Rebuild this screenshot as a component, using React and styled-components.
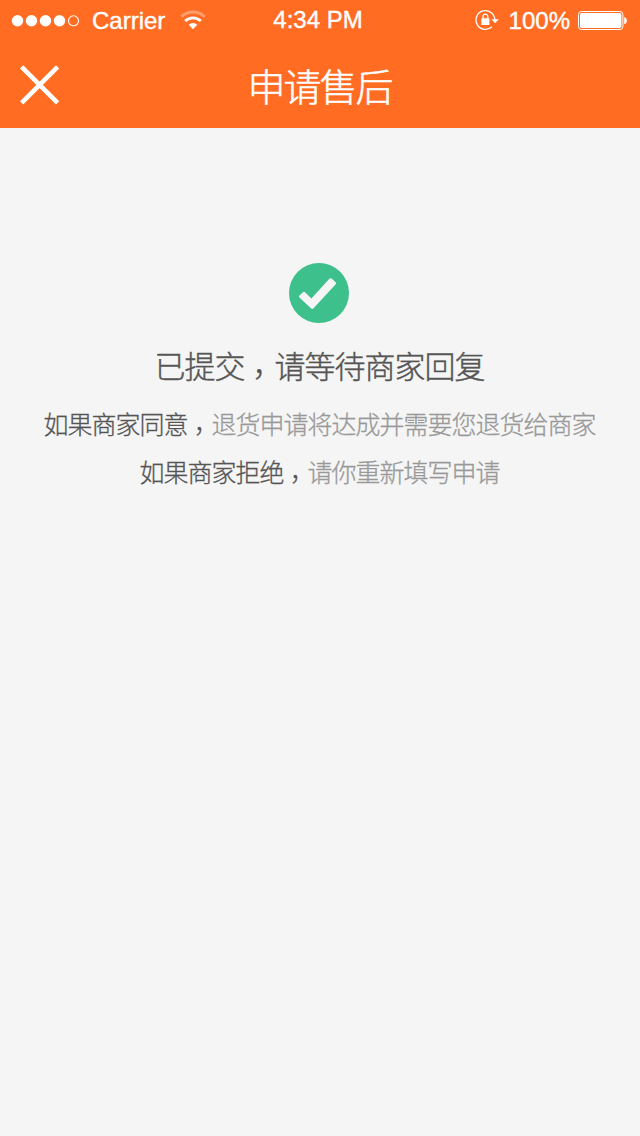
import React from 'react';
import styled, { createGlobalStyle } from 'styled-components';

const GlobalStyle = createGlobalStyle`
  * { box-sizing: border-box; }
  body {
    margin: 0;
    background: #f5f5f5;
    font-family: "Noto Sans CJK SC", sans-serif;
    text-spacing-trim: space-all;
  }
`;

const Screen = styled.div`
  width: 640px;
  height: 1136px;
  display: flex;
  flex-direction: column;
  background: #f5f5f5;
  overflow: hidden;
`;

const Header = styled.header`
  height: 128px;
  background: #ff6c22;
  color: #fff;
`;

const StatusBar = styled.div`
  height: 40px;
  display: grid;
  grid-template-columns: 1fr auto 1fr;
  align-items: center;
  padding: 0 12px 0 11px;
`;

const StatusGroup = styled.div`
  display: flex;
  align-items: center;
  justify-content: ${({ $end }) => ($end ? 'flex-end' : 'flex-start')};
`;

const StatusText = styled.span`
  font: 24px/28px "Liberation Sans", Arial, sans-serif;
  -webkit-text-stroke: 0.4px #fff;
  white-space: nowrap;
  padding-top: ${({ $drop = 0 }) => $drop}px;
  margin: ${({ $margin }) => $margin || '0'};
`;

const Drawing = styled.svg`
  display: block;
  flex: none;
  margin: ${({ $margin }) => $margin || '0'};
`;

const NavBar = styled.div`
  height: 88px;
  display: grid;
  grid-template-columns: 80px 1fr 80px;
  align-items: center;
`;

const CloseButton = styled.button`
  width: 80px;
  height: 88px;
  padding: 1px 0 0 20px;
  border: 0;
  background: none;
  color: inherit;
`;

const Title = styled.h1`
  margin: 0;
  padding: 1px 1px 0 0;
  text-align: center;
  font-size: 38px;
  line-height: 88px;
  font-weight: 300;
  letter-spacing: -2px;
  -webkit-text-stroke: 0.5px currentColor;
`;

const Result = styled.main`
  display: flex;
  flex-direction: column;
  align-items: center;
  padding-top: 135px;
`;

const Heading = styled.h2`
  margin: 18px 1px 0 0;
  font-size: 31px;
  line-height: 48px;
  font-weight: 300;
  letter-spacing: -1px;
  color: #555;
  -webkit-text-stroke: 0.4px currentColor;
`;

const Line = styled.p`
  margin: 0;
  font-size: 25px;
  line-height: 48px;
  font-weight: 300;
  letter-spacing: -1px;
  color: #999;
  white-space: nowrap;
  -webkit-text-stroke: 0.3px currentColor;
`;

const Notes = styled.div`
  padding: 10px 1px 0 0;
  text-align: center;
`;

const Condition = styled.span`
  color: #555;
  -webkit-text-stroke: 0.3px currentColor;
`;

const CommaCell = styled.span`
  padding-left: 0.25em;
  letter-spacing: calc(-0.25em - 1px);
  line-height: 1;
  vertical-align: 0.05em;
`;

function Comma() {
  return <CommaCell>{'\uFF0C'}</CommaCell>;
}

function SignalDots() {
  return (
    <Drawing width="70" height="14" viewBox="0 0 70 14" $margin="1px 0 0">
      {[6.5, 20.5, 34.5, 48.5].map((x) => (
        <circle key={x} cx={x} cy="6.8" r="5.7" fill="#fff" />
      ))}
      <circle cx="62.5" cy="6.8" r="5" fill="none" stroke="#fff" strokeWidth="1.1" />
    </Drawing>
  );
}

function Wifi() {
  return (
    <Drawing width="26" height="20" viewBox="0 0 26 20" $margin="0 0 0 15px" fill="none" stroke="#fff">
      <path d="M1.3 6.8a16.8 16.8 0 0 1 23.4 0" strokeWidth="2.9" opacity=".35" />
      <path d="M5.2 11a11.3 11.3 0 0 1 15.6 0" strokeWidth="2.9" />
      <path d="M13 19.2l-4.3-4.5a6.4 6.4 0 0 1 8.6 0z" fill="#fff" stroke="none" />
    </Drawing>
  );
}

function RotationLock() {
  return (
    <Drawing width="24" height="22" viewBox="0 0 24 22">
      <path d="M16.9 17.8A9.4 9.4 0 1 1 19.8 10.8" fill="none" stroke="#fff" strokeWidth="1.3" />
      <path d="M16.4 10.3h7.4L20.1 14.3z" fill="#fff" />
      <rect x="6.4" y="9.2" width="8" height="6.8" rx=".5" fill="#fff" />
      <path d="M8 9.5V7.6a2.4 2.4 0 0 1 4.8 0v1.9" fill="none" stroke="#fff" strokeWidth="1.3" />
    </Drawing>
  );
}

function Battery() {
  return (
    <Drawing width="50" height="20" viewBox="0 0 50 20" $margin="2px 0 0 8px">
      <rect x=".5" y=".5" width="44.4" height="18" rx="3" fill="none" stroke="#fff" strokeWidth="1" />
      <rect x="2" y="2" width="41.4" height="15" rx="1.8" fill="#fff" />
      <path d="M46.2 6c3.6.9 3.6 6.4 0 7.3z" fill="#fff" />
    </Drawing>
  );
}

export default function App() {
  return (
    <>
      <GlobalStyle />
      <Screen>
        <Header>
          <StatusBar>
            <StatusGroup>
              <SignalDots />
              <StatusText $margin="0 0 0 11px" $drop={2}>Carrier</StatusText>
              <Wifi />
            </StatusGroup>
            <StatusText $margin="0 3px 0 0">4:34 PM</StatusText>
            <StatusGroup $end>
              <RotationLock />
              <StatusText $margin="0 0 0 10px" $drop={2}>100%</StatusText>
              <Battery />
            </StatusGroup>
          </StatusBar>
          <NavBar>
            <CloseButton aria-label="关闭">
              <Drawing width="40" height="40" viewBox="0 0 40 40">
                <path d="M1.6 1.8l36 36M37.6 1.8l-36 36" stroke="#fff" strokeWidth="4.6" />
              </Drawing>
            </CloseButton>
            <Title>申请售后</Title>
          </NavBar>
        </Header>
        <Result>
          <Drawing width="62" height="60" viewBox="0 0 62 60">
            <circle cx="30" cy="30" r="30" fill="#3dc08b" />
            <path
              d="M10.4 32.6L14 29.2Q15 28.4 16 29.2L22.4 35.4L40.6 15.6Q41.6 14.7 42.6 15.6L46.6 19.2Q47.6 20.2 46.7 21.2L24.3 45.5Q23.3 46.4 22.2 45.5L10.4 34.6Q9.4 33.6 10.4 32.6Z"
              fill="#f5f5f5"
            />
          </Drawing>
          <Heading>已提交<Comma />请等待商家回复</Heading>
          <Notes>
            <Line><Condition>如果商家同意<Comma /></Condition>退货申请将达成并需要您退货给商家</Line>
            <Line><Condition>如果商家拒绝<Comma /></Condition>请你重新填写申请</Line>
          </Notes>
        </Result>
      </Screen>
    </>
  );
}
